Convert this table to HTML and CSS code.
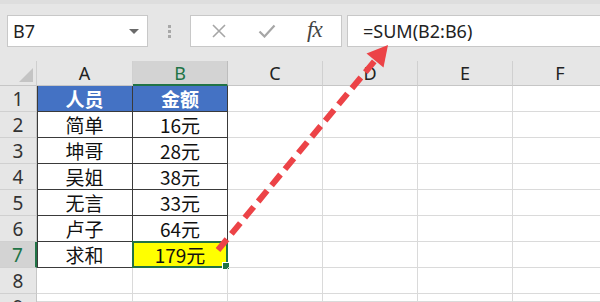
FILE: index.html
```html
<!DOCTYPE html>
<html lang="zh-CN">
<head>
<meta charset="utf-8">
<link rel="stylesheet" href="styles.css">
</head>
<body>
<div class="app">
  <div class="topbar">
    <div class="namebox"><span class="nb-text">B7</span><span class="nb-caret"></span></div>
    <div class="dots"><i></i><i></i><i></i></div>
    <div class="fxbox">
      <svg class="ico-x" width="14" height="14" viewBox="0 0 14 14"><path d="M1 1L13 13M13 1L1 13" stroke="#a6a6a6" stroke-width="1.6" fill="none"/></svg>
      <svg class="ico-check" width="18" height="14" viewBox="0 0 18 14"><path d="M1.5 7.5L6.5 12.5L16.5 1.5" stroke="#a6a6a6" stroke-width="2.2" fill="none"/></svg>
      <span class="fx">fx</span>
    </div>
    <div class="formula">=SUM(B2:B6)</div>
  </div>
  <div class="sheet">
    <div class="corner"><span class="corner-tri"></span></div>
    <div class="colh">A</div>
    <div class="colh sel">B</div>
    <div class="colh">C</div>
    <div class="colh">D</div>
    <div class="colh">E</div>
    <div class="colh">F</div>

    <div class="rowh">1</div>
    <div class="cell t ta head">人员</div>
    <div class="cell t head">金额</div>
    <div class="cell"></div><div class="cell"></div><div class="cell"></div><div class="cell"></div>

    <div class="rowh">2</div>
    <div class="cell t ta">简单</div>
    <div class="cell t">16元</div>
    <div class="cell"></div><div class="cell"></div><div class="cell"></div><div class="cell"></div>

    <div class="rowh">3</div>
    <div class="cell t ta">坤哥</div>
    <div class="cell t">28元</div>
    <div class="cell"></div><div class="cell"></div><div class="cell"></div><div class="cell"></div>

    <div class="rowh">4</div>
    <div class="cell t ta">吴姐</div>
    <div class="cell t">38元</div>
    <div class="cell"></div><div class="cell"></div><div class="cell"></div><div class="cell"></div>

    <div class="rowh">5</div>
    <div class="cell t ta">无言</div>
    <div class="cell t">33元</div>
    <div class="cell"></div><div class="cell"></div><div class="cell"></div><div class="cell"></div>

    <div class="rowh">6</div>
    <div class="cell t ta">卢子</div>
    <div class="cell t">64元</div>
    <div class="cell"></div><div class="cell"></div><div class="cell"></div><div class="cell"></div>

    <div class="rowh sel">7</div>
    <div class="cell t ta">求和</div>
    <div class="cell t total">179元<span class="selbox"><span class="handle"></span></span></div>
    <div class="cell"></div><div class="cell"></div><div class="cell"></div><div class="cell"></div>

    <div class="rowh">8</div>
    <div class="cell"></div><div class="cell"></div><div class="cell"></div><div class="cell"></div><div class="cell"></div><div class="cell"></div>

    <div class="rowh last">9</div>
    <div class="cell"></div><div class="cell"></div><div class="cell"></div><div class="cell"></div><div class="cell"></div><div class="cell"></div>
  </div>
  <svg class="arrow" width="600" height="302" viewBox="0 0 600 302">
    <line x1="218" y1="250" x2="377" y2="58" stroke="#ec4347" stroke-width="6" stroke-dasharray="14 7"/>
    <polygon points="388,45 366.5,53.5 383.5,67.5" fill="#ec4347"/>
  </svg>
</div>
</body>
</html>
```
FILE: styles.css
```css
html, body {
  margin: 0;
  padding: 0;
  background: #ffffff;
}
body {
  width: 600px;
  height: 302px;
  overflow: hidden;
  font-family: "Noto Sans", "Noto Sans CJK SC", sans-serif;
}
.app {
  position: relative;
  width: 600px;
  height: 302px;
  overflow: hidden;
}
.topbar {
  height: 61px;
  box-sizing: border-box;
  background: #e6e6e6;
  border-top: 4px solid #dedede;
  display: flex;
  align-items: flex-start;
  padding: 11px 0 0 7px;
}
.namebox {
  width: 141px;
  height: 32px;
  box-sizing: border-box;
  background: #fff;
  border: 1px solid #c8c8c8;
  display: flex;
  align-items: center;
  justify-content: space-between;
  padding: 0 8px 0 5px;
}
.nb-text {
  font-size: 18px;
  color: #222;
}
.nb-caret {
  width: 0;
  height: 0;
  border-left: 5px solid transparent;
  border-right: 5px solid transparent;
  border-top: 5px solid #6a6a6a;
}
.dots {
  width: 42px;
  height: 32px;
  display: flex;
  flex-direction: column;
  align-items: center;
  justify-content: center;
  gap: 2px;
}
.dots i {
  display: block;
  width: 3px;
  height: 3px;
  background: #a8a8a8;
}
.fxbox {
  width: 152px;
  height: 32px;
  box-sizing: border-box;
  background: #fff;
  border: 1px solid #c8c8c8;
  display: flex;
  align-items: center;
  padding-left: 21px;
}
.ico-x {
  margin-right: 32px;
}
.ico-check {
  margin-right: 31px;
}
.fx {
  font-family: "Liberation Serif", "DejaVu Serif", serif;
  font-style: italic;
  font-size: 23px;
  color: #444;
  letter-spacing: -1px;
  margin-top: -3px;
}
.formula {
  margin-left: 5px;
  flex: 1;
  height: 32px;
  box-sizing: border-box;
  background: #fff;
  border: 1px solid #c8c8c8;
  border-right: none;
  font-size: 18px;
  color: #222;
  line-height: 30px;
  padding-left: 15px;
}
.sheet {
  display: grid;
  grid-template-columns: 37px 96px 95px 95px 95px 95px 95px;
  grid-template-rows: 25px repeat(8, 26px) 8px;
  font-family: "Noto Sans CJK SC", "Noto Sans", sans-serif;
}
.corner {
  background: #e6e6e6;
  border-right: 1px solid #cfcfcf;
  border-bottom: 1px solid #c6c6c6;
  box-sizing: border-box;
  position: relative;
}
.corner-tri {
  position: absolute;
  right: 3px;
  bottom: 3px;
  width: 0;
  height: 0;
  border-left: 14px solid transparent;
  border-bottom: 14px solid #c4c4c4;
}
.colh {
  background: #e6e6e6;
  box-sizing: border-box;
  border-right: 1px solid #d0d0d0;
  border-bottom: 1px solid #c6c6c6;
  text-align: center;
  font-family: "Noto Sans", sans-serif;
  font-size: 18px;
  line-height: 25px;
  color: #222;
}
.colh.sel {
  background: #d3d3d3;
  color: #217346;
  border-bottom: 2px solid #217346;
  border-right-color: #bdbdbd;
}
.rowh {
  background: #e6e6e6;
  box-sizing: border-box;
  border-right: 1px solid #c6c6c6;
  border-bottom: 1px solid #d0d0d0;
  text-align: center;
  font-family: "Noto Sans", sans-serif;
  font-size: 19px;
  line-height: 26px;
  color: #333;
  overflow: hidden;
}
.rowh.last {
  border-bottom: none;
}
.rowh.sel {
  background: #d3d3d3;
  color: #217346;
  border-right: 2px solid #217346;
}
.cell {
  box-sizing: border-box;
  border-right: 1px solid #dadada;
  border-bottom: 1px solid #dadada;
  text-align: center;
  font-size: 19px;
  line-height: 25px;
  color: #111;
  position: relative;
}
.cell.t {
  border-right-color: #3a3a3a;
  border-bottom-color: #3a3a3a;
}
.cell.ta {
  box-shadow: inset 1px 0 0 #3a3a3a;
}
.cell.head {
  background: #4472c4;
  color: #fff;
  font-weight: 700;
}
.cell.total {
  background: #ffff00;
}
.selbox {
  position: absolute;
  left: -1px;
  top: -1px;
  right: -1px;
  bottom: -1px;
  border: 2px solid #217346;
}
.handle {
  position: absolute;
  right: -4px;
  bottom: -4px;
  width: 6px;
  height: 6px;
  background: #217346;
  border: 1px solid #fff;
}
.arrow {
  position: absolute;
  left: 0;
  top: 0;
  pointer-events: none;
}
```
